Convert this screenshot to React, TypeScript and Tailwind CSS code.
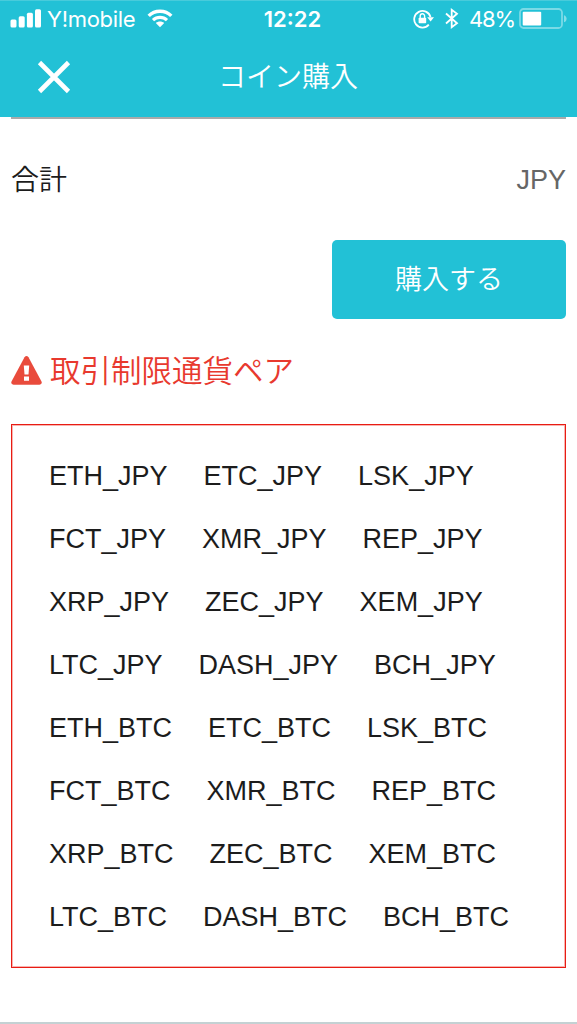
import type { ReactNode } from "react";

const PAIRS = [
  ["ETH_JPY", "ETC_JPY", "LSK_JPY"],
  ["FCT_JPY", "XMR_JPY", "REP_JPY"],
  ["XRP_JPY", "ZEC_JPY", "XEM_JPY"],
  ["LTC_JPY", "DASH_JPY", "BCH_JPY"],
  ["ETH_BTC", "ETC_BTC", "LSK_BTC"],
  ["FCT_BTC", "XMR_BTC", "REP_BTC"],
  ["XRP_BTC", "ZEC_BTC", "XEM_BTC"],
  ["LTC_BTC", "DASH_BTC", "BCH_BTC"],
];

function StatusBar() {
  return (
    <div className="grid h-[35px] grid-cols-[1fr_auto_1fr] items-center pl-[10px] pr-[9px] font-['Inter',sans-serif] text-[22px] leading-none">
      <div className="flex items-center">
        <svg width="31" height="19" viewBox="0 0 31 19" fill="currentColor">
          <rect x="0.5" y="10.5" width="6" height="8" rx="1.5" />
          <rect x="8.7" y="7.3" width="6" height="11.2" rx="1.5" />
          <rect x="16.9" y="3.7" width="6" height="14.8" rx="1.5" />
          <rect x="25" y="0.3" width="6" height="18.2" rx="1.5" />
        </svg>
        <span className="ml-[6px] w-[88px] whitespace-nowrap text-[22px] tracking-[-0.3px]">Y!mobile</span>
        <svg className="ml-[12px]" width="26" height="19" viewBox="0 0 26 19">
          <path d="M1.7 6.9C7.8.7 18.2.7 24.3 6.9" fill="none" stroke="currentColor" strokeWidth="3.4" />
          <path d="M6 11.2c4-3.7 10-3.7 14 0" fill="none" stroke="currentColor" strokeWidth="3.2" />
          <path d="M8.8 14c2.4-2 6-2 8.4 0L13 18.3z" fill="currentColor" />
        </svg>
      </div>
      <span className="pl-[7px] font-semibold">12:22</span>
      <div className="flex items-center justify-end">
        <svg width="21" height="20" viewBox="0 0 21 20">
          <path d="M15.8 15.7A8.3 8.3 0 1 1 17.5 8" fill="none" stroke="currentColor" strokeWidth="1.8" />
          <path d="M14.2 8.2H21l-3.4 4.4z" fill="currentColor" />
          <rect x="5.6" y="8.8" width="7.6" height="5.4" rx="0.8" fill="currentColor" />
          <path d="M7.2 9V7a2.2 2.2 0 0 1 4.4 0v2" fill="none" stroke="currentColor" strokeWidth="1.4" />
        </svg>
        <svg className="ml-[11px]" width="14" height="21" viewBox="0 0 14 21" fill="none" stroke="currentColor" strokeWidth="1.8">
          <path d="m1 5.5 11 9.7-5.3 4V1.8l5.3 4L1 15.5" />
        </svg>
        <span className="ml-[10px] w-[46px] whitespace-nowrap text-[22px] tracking-[-1.1px]">48%</span>
        <svg className="ml-[4px]" width="49" height="22" viewBox="0 0 49 22">
          <rect x="1" y="1" width="42" height="19" rx="3.5" fill="none" stroke="#fff" strokeOpacity="0.4" strokeWidth="1.8" />
          <rect x="3.7" y="3.7" width="18.5" height="13.8" rx="1" fill="#fff" />
          <path d="M45 7.3c3.5 1 3.5 6 0 7z" fill="#fff" fillOpacity="0.45" />
        </svg>
      </div>
    </div>
  );
}

function Header({ children }: { children: ReactNode }) {
  return (
    <header className="h-[117px] border-t border-[#48cbdb] bg-[#22c1d6] text-white">
      <StatusBar />
      <div className="grid h-[81px] grid-cols-[1fr_auto_1fr] items-center pl-[37px]">
        <svg width="34" height="34" viewBox="0 0 34 34" stroke="currentColor" strokeWidth="4.6">
          <path d="M2.5 2.5l29 29M31.5 2.5l-29 29" />
        </svg>
        <h1 className="mr-[38px] pt-[3px] text-[28px] font-[350] leading-none">{children}</h1>
      </div>
    </header>
  );
}

export default function App() {
  return (
    <div className="flex h-[1024px] w-[577px] flex-col overflow-hidden bg-white font-['Liberation_Sans','Noto_Sans_CJK_JP',sans-serif] text-[#1c1c1c]">
      <Header>コイン購入</Header>
      <main className="flex-1 px-[11px]">
        <div className="h-[2px] bg-[#aaa]" />
        <div className="mt-[41px] flex h-10 items-center justify-between">
          <span className="pt-px text-[28px] font-[350]">合計</span>
          <span className="text-[27px] text-[#666]">JPY</span>
        </div>
        <div className="mt-[40px] flex justify-end">
          <button className="h-[79px] w-[234px] rounded-[5px] bg-[#22c1d6] pt-[2px] text-[27px] font-[350] text-white">
            購入する
          </button>
        </div>
        <h2 className="mt-[32px] flex h-10 items-center gap-[8px] text-[30.5px] font-[350] text-[#e8392e]">
          <svg className="-mt-[2px]" width="31" height="29" viewBox="0 0 31 29">
            <path d="M13.5 1.2q2-2.2 4 0l13 24.3q1 3-2 3.2h-26q-3-.2-2-3.2z" fill="#e94b3c" />
            <path d="M12.8 9.5h5.4l-.7 9h-4zM13 20.5h5v4.3h-5z" fill="#fff" />
          </svg>
          <span className="pt-px">取引制限通貨ペア</span>
        </h2>
        <div className="mt-[33px] h-[544px] border border-[#e81c14] pt-[19.5px] pl-[37px] shadow-[inset_0_0_0_1px_#f8b4b0]">
          {PAIRS.map((row) => (
            <ul key={row[0]} className="flex h-[63px] items-center gap-[36px] text-[27px]">
              {row.map((pair) => (
                <li key={pair}>{pair}</li>
              ))}
            </ul>
          ))}
        </div>
      </main>
      <footer className="h-[2px] bg-[#c4d1d3]" />
    </div>
  );
}
